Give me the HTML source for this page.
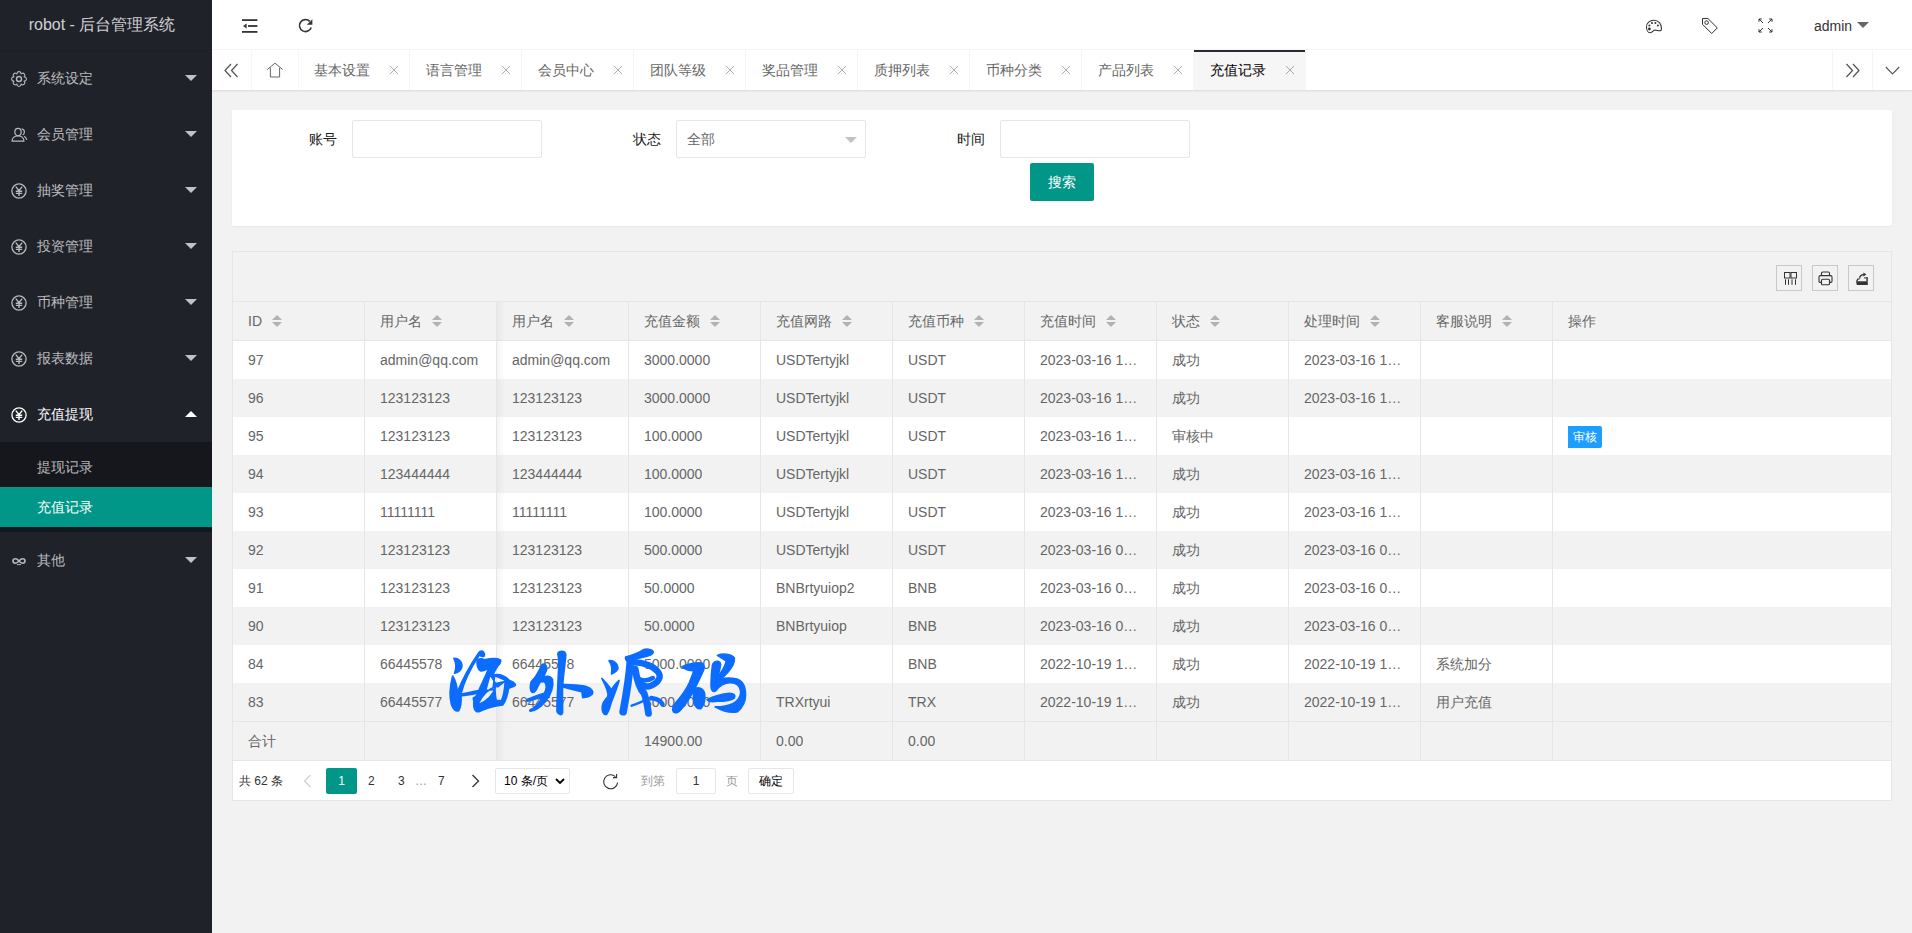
<!DOCTYPE html>
<html><head><meta charset="utf-8">
<style>
*{margin:0;padding:0;box-sizing:border-box}
html,body{width:1912px;height:933px;overflow:hidden;background:#f2f2f2;font-family:"Liberation Sans",sans-serif;font-size:14px;color:#666;position:relative}
.a{position:absolute}
svg{display:block}
#side{position:absolute;left:0;top:0;width:212px;height:933px;background:#20222A}
#logo{position:absolute;left:-4px;top:0;width:212px;height:50px;line-height:50px;text-align:center;color:rgba(255,255,255,.8);font-size:16px;box-shadow:0 1px 2px 0 rgba(0,0,0,.15)}
.nav{position:absolute;left:0;width:212px;height:56px;line-height:56px;color:rgba(255,255,255,.7);font-size:14px}
.nav .t{position:absolute;left:37px;top:0}
.nav .ic{position:absolute;left:11px;top:20px}
.nav .arr{position:absolute;left:185px;top:25px;width:0;height:0;border-left:6px solid transparent;border-right:6px solid transparent;border-top:6px solid #c2c2c2}
.nav .arr.up{border-top:none;border-bottom:6px solid #fff;top:25px}
.child{position:absolute;left:0;top:442px;width:212px;height:90px;background:rgba(0,0,0,.3)}
.dd{position:absolute;left:0;width:212px;height:40px;line-height:40px;color:rgba(255,255,255,.7)}
.dd .t{position:absolute;left:37px;top:0}
#header{position:absolute;left:212px;top:0;width:1700px;height:50px;background:#fff;border-bottom:1px solid #f6f6f6}
#tabs{position:absolute;left:212px;top:50px;width:1700px;height:40px;background:#fff;box-shadow:0 1px 2px 0 rgba(0,0,0,.1)}
.tab{position:absolute;top:0;height:40px;line-height:40px;border-right:1px solid #f6f6f6;color:#666;width:112px}
.tab .t{position:absolute;left:16px;top:0}
.tab .x{position:absolute;left:92px;top:16px}
.card{position:absolute;background:#fff;border-radius:2px;box-shadow:0 1px 2px 0 rgba(0,0,0,.05)}
.lbl{position:absolute;color:#1a1a1a;line-height:38px;height:38px}
.inp{position:absolute;height:38px;border:1px solid #e6e6e6;border-radius:2px;background:#fff}
.btn{position:absolute;background:#009688;color:#fff;border-radius:2px;text-align:center}
#tbl{position:absolute;left:232px;top:251px;width:1660px;height:550px;border:1px solid #e6e6e6;background:#f2f2f2}
.row{position:absolute;left:0;width:1658px;height:38px;line-height:38px;background:#fff}
.row.g{background:#f2f2f2}
.cell{position:absolute;top:0;height:38px;padding-left:15px;white-space:nowrap;overflow:hidden;color:#666}
.vl{position:absolute;width:1px;background:#e6e6e6}
.hl{position:absolute;height:1px;background:#e6e6e6}
.sort{display:inline-block;vertical-align:middle;position:relative;width:10px;height:12px;margin-left:10px;top:-1px}
.sort:before{content:"";position:absolute;left:0;top:0;border-left:5px solid transparent;border-right:5px solid transparent;border-bottom:5px solid #b2b2b2}
.sort:after{content:"";position:absolute;left:0;top:7px;border-left:5px solid transparent;border-right:5px solid transparent;border-top:5px solid #b2b2b2}
.tool{position:absolute;top:14px;width:26px;height:26px;border:1px solid #c9c9c9;border-radius:0}
#page{position:absolute;left:0;top:509px;width:1658px;height:39px;background:#fff;font-size:12px;color:#333}

</style></head><body>
<div id="side">
  <div id="logo">robot - 后台管理系统</div>
  <div class="nav" style="top:50px">
    <svg class="ic" width="16" height="16" viewBox="0 0 16 16" style="top:21px;left:11px"><g fill="none" stroke="#b8b9bc" stroke-width="1.1"><path d="M6.09,3.38 A2.05,2.05 0 1 1 9.91,3.38 A2.05,2.05 0 1 1 12.62,6.09 A2.05,2.05 0 1 1 12.62,9.91 A2.05,2.05 0 1 1 9.91,12.62 A2.05,2.05 0 1 1 6.09,12.62 A2.05,2.05 0 1 1 3.38,9.91 A2.05,2.05 0 1 1 3.38,6.09 A2.05,2.05 0 1 1 6.09,3.38Z"/><circle cx="8" cy="8" r="2.5" stroke-width="1.4"/></g></svg>
    <span class="t">系统设定</span><i class="arr"></i>
  </div>
  <div class="nav" style="top:106px">
    <svg class="ic" width="17" height="16" viewBox="0 0 17 16" style="top:21px"><g fill="none" stroke="#b8b9bc" stroke-width="1.2"><ellipse cx="7" cy="5" rx="3.2" ry="3.7"/><path d="M1.1 14.1c0-3.2 2.6-5.2 5.9-5.2s5.9 2 5.9 5.2z"/><path d="M10.6 1.9c1.6.3 2.8 1.5 2.8 3.2 0 1.2-.6 2.3-1.6 2.9M13.2 9.2c1.5.9 2.4 2.2 2.4 3.8"/></g></svg>
    <span class="t">会员管理</span><i class="arr"></i>
  </div>
  <div class="nav" style="top:162px">
    <svg class="ic" width="16" height="16" viewBox="0 0 16 16" style="top:21px"><g fill="none" stroke="#b8b9bc" stroke-width="1.3"><circle cx="8" cy="8" r="7.1"/><path d="M4.8 3.6L8 7.6l3.2-4M4.8 8.2h6.4M4.8 10.4h6.4M8 7.6v5.4" stroke-width="1.4"/></g></svg>
    <span class="t">抽奖管理</span><i class="arr"></i>
  </div>
  <div class="nav" style="top:218px">
    <svg class="ic" width="16" height="16" viewBox="0 0 16 16" style="top:21px"><g fill="none" stroke="#b8b9bc" stroke-width="1.3"><circle cx="8" cy="8" r="7.1"/><path d="M4.8 3.6L8 7.6l3.2-4M4.8 8.2h6.4M4.8 10.4h6.4M8 7.6v5.4" stroke-width="1.4"/></g></svg>
    <span class="t">投资管理</span><i class="arr"></i>
  </div>
  <div class="nav" style="top:274px">
    <svg class="ic" width="16" height="16" viewBox="0 0 16 16" style="top:21px"><g fill="none" stroke="#b8b9bc" stroke-width="1.3"><circle cx="8" cy="8" r="7.1"/><path d="M4.8 3.6L8 7.6l3.2-4M4.8 8.2h6.4M4.8 10.4h6.4M8 7.6v5.4" stroke-width="1.4"/></g></svg>
    <span class="t">币种管理</span><i class="arr"></i>
  </div>
  <div class="nav" style="top:330px">
    <svg class="ic" width="16" height="16" viewBox="0 0 16 16" style="top:21px"><g fill="none" stroke="#b8b9bc" stroke-width="1.3"><circle cx="8" cy="8" r="7.1"/><path d="M4.8 3.6L8 7.6l3.2-4M4.8 8.2h6.4M4.8 10.4h6.4M8 7.6v5.4" stroke-width="1.4"/></g></svg>
    <span class="t">报表数据</span><i class="arr"></i>
  </div>
  <div class="nav" style="top:386px;color:#fff">
    <svg class="ic" width="16" height="16" viewBox="0 0 16 16" style="top:21px"><g fill="none" stroke="#fff" stroke-width="1.3"><circle cx="8" cy="8" r="7.1"/><path d="M4.8 3.6L8 7.6l3.2-4M4.8 8.2h6.4M4.8 10.4h6.4M8 7.6v5.4" stroke-width="1.4"/></g></svg>
    <span class="t">充值提现</span><i class="arr up"></i>
  </div>
  <div class="child">
    <div class="dd" style="top:5px"><span class="t">提现记录</span></div>
    <div class="dd" style="top:45px;background:#009688;color:#fff"><span class="t">充值记录</span></div>
  </div>
  <div class="nav" style="top:532px">
    <svg class="ic" width="16" height="16" viewBox="0 0 16 16" style="top:21px"><g fill="none" stroke="#b8b9bc" stroke-width="1.6"><path d="M8 8C6.8 6.6 5.9 5.8 4.4 5.8 3.1 5.8 2 6.7 2 8s1.1 2.2 2.4 2.2C5.9 10.2 6.8 9.4 8 8s2.1-2.2 3.6-2.2C12.9 5.8 14 6.7 14 8s-1.1 2.2-2.4 2.2C10.1 10.2 9.2 9.4 8 8z"/><path d="M6 11.6h4" stroke-width="1"/></g></svg>
    <span class="t">其他</span><i class="arr"></i>
  </div>
</div>

<div id="header">
  <svg class="a" style="left:30px;top:18px" width="16" height="16" viewBox="0 0 16 16"><g fill="#333"><rect x="0" y="1.2" width="15.4" height="1.8"/><rect x="6" y="7.1" width="9.4" height="1.8"/><rect x="0" y="13" width="15.4" height="1.8"/><path d="M1 8l3.6-2.6v5.2z"/></g></svg>
  <svg class="a" style="left:86px;top:18px" width="16" height="16" viewBox="0 0 16 16"><g fill="none" stroke="#333" stroke-width="1.6"><path d="M13.2 9.4A6 6 0 1 1 11.8 3.4"/></g><path d="M14.4 1.2v5.6H8.8z" fill="#333"/></svg>
  <svg class="a" style="left:1433px;top:18px" width="18" height="17" viewBox="0 0 18 17"><g fill="none" stroke="#333" stroke-width="1.05"><path d="M9 2.2C4.6 2.2 1.5 5.2 1.5 9c0 3.2 1.5 5.8 3.6 5.8 2 0 2.4-2.2 4.4-2.6 1.8-.4 3.2.6 5 .6 1.4 0 2-1 2-2.4C16.5 6 13.4 2.2 9 2.2z"/></g><g fill="#333"><circle cx="4.4" cy="11" r="1.4"/><circle cx="4.4" cy="7.4" r="1"/><circle cx="7" cy="4.9" r="1"/><circle cx="10.4" cy="4.9" r="1"/><circle cx="12.9" cy="7.6" r="1"/></g></svg>
  <svg class="a" style="left:1489px;top:17px" width="18" height="18" viewBox="0 0 18 18"><g fill="none" stroke="#333" stroke-width="1"><path d="M1.5 1.5h5.4l9.4 9.4-5.6 5.6-9.2-9.2z"/><circle cx="5.6" cy="5.6" r="1.8"/></g></svg>
  <svg class="a" style="left:1546px;top:18px" width="15" height="15" viewBox="0 0 15 15"><g fill="none" stroke="#333" stroke-width="1"><path d="M1 1l4 4M1 1v2.8M1 1h2.8M14 1l-4 4M14 1v2.8M14 1h-2.8M1 14l4-4M1 14v-2.8M1 14h2.8M14 14l-4-4M14 14v-2.8M14 14h-2.8"/></g></svg>
  <span class="a" style="left:1602px;top:1px;line-height:50px;color:#333;font-size:14px">admin</span>
  <i class="a" style="left:1645px;top:22px;width:0;height:0;border-left:6px solid transparent;border-right:6px solid transparent;border-top:6px solid #666"></i>
</div>
<div id="tabs">
  <div class="a" style="left:0;top:0;width:40px;height:40px;border-right:1px solid #f6f6f6"></div>
  <svg class="a" style="left:12px;top:13px" width="15" height="15" viewBox="0 0 15 15"><g fill="none" stroke="#555" stroke-width="1.25"><path d="M7 1L1 7.5 7 14M13.5 1l-6 6.5 6 6.5"/></g></svg>
  <div class="tab" style="left:40px;width:47px"></div>
  <svg class="a" style="left:54px;top:12px" width="18" height="16" viewBox="0 0 18 16"><g fill="none" stroke="#666" stroke-width="1"><path d="M1.2 7.6L9 1.2l7.8 6.4M4.4 5.6v9.4h9.2V5.6"/></g></svg>
  <div class="tab" style="left:86px"><span class="t">基本设置</span><svg class="x" width="8" height="8" viewBox="0 0 8 8"><path d="M0 0L8 8M8 0L0 8" stroke="#aaa" stroke-width="1"/></svg></div>
  <div class="tab" style="left:198px"><span class="t">语言管理</span><svg class="x" width="8" height="8" viewBox="0 0 8 8"><path d="M0 0L8 8M8 0L0 8" stroke="#aaa" stroke-width="1"/></svg></div>
  <div class="tab" style="left:310px"><span class="t">会员中心</span><svg class="x" width="8" height="8" viewBox="0 0 8 8"><path d="M0 0L8 8M8 0L0 8" stroke="#aaa" stroke-width="1"/></svg></div>
  <div class="tab" style="left:422px"><span class="t">团队等级</span><svg class="x" width="8" height="8" viewBox="0 0 8 8"><path d="M0 0L8 8M8 0L0 8" stroke="#aaa" stroke-width="1"/></svg></div>
  <div class="tab" style="left:534px"><span class="t">奖品管理</span><svg class="x" width="8" height="8" viewBox="0 0 8 8"><path d="M0 0L8 8M8 0L0 8" stroke="#aaa" stroke-width="1"/></svg></div>
  <div class="tab" style="left:646px"><span class="t">质押列表</span><svg class="x" width="8" height="8" viewBox="0 0 8 8"><path d="M0 0L8 8M8 0L0 8" stroke="#aaa" stroke-width="1"/></svg></div>
  <div class="tab" style="left:758px"><span class="t">币种分类</span><svg class="x" width="8" height="8" viewBox="0 0 8 8"><path d="M0 0L8 8M8 0L0 8" stroke="#aaa" stroke-width="1"/></svg></div>
  <div class="tab" style="left:870px"><span class="t">产品列表</span><svg class="x" width="8" height="8" viewBox="0 0 8 8"><path d="M0 0L8 8M8 0L0 8" stroke="#aaa" stroke-width="1"/></svg></div>
  <div class="tab" style="left:982px;background:#f6f6f6;color:#000"><i class="a" style="left:0;top:0;width:111px;height:2px;background:#292B34"></i><span class="t">充值记录</span><svg class="x" width="8" height="8" viewBox="0 0 8 8"><path d="M0 0L8 8M8 0L0 8" stroke="#aaa" stroke-width="1"/></svg></div>
  <div class="a" style="left:1620px;top:0;width:40px;height:40px;border-left:1px solid #f6f6f6"></div>
  <svg class="a" style="left:1633px;top:13px" width="15" height="15" viewBox="0 0 15 15"><g fill="none" stroke="#555" stroke-width="1.25"><path d="M1.5 1l6 6.5-6 6.5M8 1l6 6.5L8 14"/></g></svg>
  <div class="a" style="left:1660px;top:0;width:40px;height:40px;border-left:1px solid #f6f6f6"></div>
  <svg class="a" style="left:1673px;top:16px" width="15" height="9" viewBox="0 0 15 9"><path d="M.8 1l6.7 7 6.7-7" fill="none" stroke="#555" stroke-width="1.1"/></svg>
</div>

<div class="card" style="left:232px;top:110px;width:1660px;height:116px">
  <div class="lbl" style="left:0;top:10px;width:105px;text-align:right">账号</div>
  <div class="inp" style="left:120px;top:10px;width:190px"></div>
  <div class="lbl" style="left:0;top:10px;width:429px;text-align:right">状态</div>
  <div class="inp" style="left:444px;top:10px;width:190px"><span class="a" style="left:10px;top:0;line-height:36px;color:#666">全部</span><i class="a" style="left:168px;top:16px;width:0;height:0;border-left:6px solid transparent;border-right:6px solid transparent;border-top:6px solid #c2c2c2"></i></div>
  <div class="lbl" style="left:0;top:10px;width:753px;text-align:right">时间</div>
  <div class="inp" style="left:768px;top:10px;width:190px"></div>
  <div class="btn" style="left:798px;top:53px;width:64px;height:38px;line-height:38px">搜索</div>
</div>

<div id="tbl">
<div class="hl" style="left:0;top:49px;width:1658px"></div>
<div class="tool" style="left:1543px;top:13px"><svg class="a" style="left:7px;top:6px" width="14" height="14" viewBox="0 0 14 14"><g fill="none" stroke="#333" stroke-width="1"><rect x="0.5" y="0.5" width="5.5" height="5.5"/><rect x="7" y="0.5" width="5.5" height="5.5"/><path d="M1.5 7.3v5.5M4.5 7.3v5.5M8 7.3v5.5M11.5 7.3v5.5"/></g></svg></div>
<div class="tool" style="left:1579px;top:13px"><svg class="a" style="left:5px;top:5px" width="15" height="15" viewBox="0 0 15 15"><g fill="none" stroke="#333" stroke-width="1.1"><path d="M3.5 4.6V2.2c0-.8.5-1.2 1.2-1.2h5.6c.7 0 1.2.4 1.2 1.2v2.4"/><path d="M3.5 11.4H2.2c-.7 0-1.2-.5-1.2-1.2V6c0-.8.6-1.4 1.4-1.4h10.2c.8 0 1.4.6 1.4 1.4v4.2c0 .7-.5 1.2-1.2 1.2h-1.3"/><rect x="3.5" y="8.2" width="8" height="5.6" rx="1"/></g></svg></div>
<div class="tool" style="left:1615px;top:13px"><svg class="a" style="left:6px;top:6px" width="14" height="14" viewBox="0 0 14 14"><g fill="#333"><path d="M1 9.2h11.8V13H1.8z"/><path d="M1 9.2l1.4-2.6h2.2v1H3.2L2.6 9.2z"/><rect x="11.4" y="5.4" width="1.4" height="4"/><rect x="9" y="5.4" width="3.8" height="1"/></g><path d="M4.6 6.6c0-2.4 1.8-4 4.4-4" fill="none" stroke="#333" stroke-width="1.2"/><path d="M8.4 0.6l3 2-3 2z" fill="#333"/></svg></div>
<div class="row g" style="top:50px">
<div class="cell" style="left:0px">ID<i class="sort"></i></div>
<div class="cell" style="left:132px">用户名<i class="sort"></i></div>
<div class="cell" style="left:264px">用户名<i class="sort"></i></div>
<div class="cell" style="left:396px">充值金额<i class="sort"></i></div>
<div class="cell" style="left:528px">充值网路<i class="sort"></i></div>
<div class="cell" style="left:660px">充值币种<i class="sort"></i></div>
<div class="cell" style="left:792px">充值时间<i class="sort"></i></div>
<div class="cell" style="left:924px">状态<i class="sort"></i></div>
<div class="cell" style="left:1056px">处理时间<i class="sort"></i></div>
<div class="cell" style="left:1188px">客服说明<i class="sort"></i></div>
<div class="cell" style="left:1320px">操作</div>
</div>
<div class="hl" style="left:0;top:88px;width:1658px"></div>
<div class="row" style="top:89px">
<div class="cell" style="left:0px">97</div>
<div class="cell" style="left:132px">admin@qq.com</div>
<div class="cell" style="left:264px">admin@qq.com</div>
<div class="cell" style="left:396px">3000.0000</div>
<div class="cell" style="left:528px">USDTertyjkl</div>
<div class="cell" style="left:660px">USDT</div>
<div class="cell" style="left:792px">2023-03-16 1…</div>
<div class="cell" style="left:924px">成功</div>
<div class="cell" style="left:1056px">2023-03-16 1…</div>
</div>
<div class="row g" style="top:127px">
<div class="cell" style="left:0px">96</div>
<div class="cell" style="left:132px">123123123</div>
<div class="cell" style="left:264px">123123123</div>
<div class="cell" style="left:396px">3000.0000</div>
<div class="cell" style="left:528px">USDTertyjkl</div>
<div class="cell" style="left:660px">USDT</div>
<div class="cell" style="left:792px">2023-03-16 1…</div>
<div class="cell" style="left:924px">成功</div>
<div class="cell" style="left:1056px">2023-03-16 1…</div>
</div>
<div class="row" style="top:165px">
<div class="cell" style="left:0px">95</div>
<div class="cell" style="left:132px">123123123</div>
<div class="cell" style="left:264px">123123123</div>
<div class="cell" style="left:396px">100.0000</div>
<div class="cell" style="left:528px">USDTertyjkl</div>
<div class="cell" style="left:660px">USDT</div>
<div class="cell" style="left:792px">2023-03-16 1…</div>
<div class="cell" style="left:924px">审核中</div>
<div class="a" style="left:1335px;top:9px;width:34px;height:22px;line-height:22px;background:#1E9FFF;color:#fff;font-size:12px;text-align:center;border-radius:0 2px 2px 0">审核</div>
</div>
<div class="row g" style="top:203px">
<div class="cell" style="left:0px">94</div>
<div class="cell" style="left:132px">123444444</div>
<div class="cell" style="left:264px">123444444</div>
<div class="cell" style="left:396px">100.0000</div>
<div class="cell" style="left:528px">USDTertyjkl</div>
<div class="cell" style="left:660px">USDT</div>
<div class="cell" style="left:792px">2023-03-16 1…</div>
<div class="cell" style="left:924px">成功</div>
<div class="cell" style="left:1056px">2023-03-16 1…</div>
</div>
<div class="row" style="top:241px">
<div class="cell" style="left:0px">93</div>
<div class="cell" style="left:132px">11111111</div>
<div class="cell" style="left:264px">11111111</div>
<div class="cell" style="left:396px">100.0000</div>
<div class="cell" style="left:528px">USDTertyjkl</div>
<div class="cell" style="left:660px">USDT</div>
<div class="cell" style="left:792px">2023-03-16 1…</div>
<div class="cell" style="left:924px">成功</div>
<div class="cell" style="left:1056px">2023-03-16 1…</div>
</div>
<div class="row g" style="top:279px">
<div class="cell" style="left:0px">92</div>
<div class="cell" style="left:132px">123123123</div>
<div class="cell" style="left:264px">123123123</div>
<div class="cell" style="left:396px">500.0000</div>
<div class="cell" style="left:528px">USDTertyjkl</div>
<div class="cell" style="left:660px">USDT</div>
<div class="cell" style="left:792px">2023-03-16 0…</div>
<div class="cell" style="left:924px">成功</div>
<div class="cell" style="left:1056px">2023-03-16 0…</div>
</div>
<div class="row" style="top:317px">
<div class="cell" style="left:0px">91</div>
<div class="cell" style="left:132px">123123123</div>
<div class="cell" style="left:264px">123123123</div>
<div class="cell" style="left:396px">50.0000</div>
<div class="cell" style="left:528px">BNBrtyuiop2</div>
<div class="cell" style="left:660px">BNB</div>
<div class="cell" style="left:792px">2023-03-16 0…</div>
<div class="cell" style="left:924px">成功</div>
<div class="cell" style="left:1056px">2023-03-16 0…</div>
</div>
<div class="row g" style="top:355px">
<div class="cell" style="left:0px">90</div>
<div class="cell" style="left:132px">123123123</div>
<div class="cell" style="left:264px">123123123</div>
<div class="cell" style="left:396px">50.0000</div>
<div class="cell" style="left:528px">BNBrtyuiop</div>
<div class="cell" style="left:660px">BNB</div>
<div class="cell" style="left:792px">2023-03-16 0…</div>
<div class="cell" style="left:924px">成功</div>
<div class="cell" style="left:1056px">2023-03-16 0…</div>
</div>
<div class="row" style="top:393px">
<div class="cell" style="left:0px">84</div>
<div class="cell" style="left:132px">66445578</div>
<div class="cell" style="left:264px">66445578</div>
<div class="cell" style="left:396px">5000.0000</div>
<div class="cell" style="left:660px">BNB</div>
<div class="cell" style="left:792px">2022-10-19 1…</div>
<div class="cell" style="left:924px">成功</div>
<div class="cell" style="left:1056px">2022-10-19 1…</div>
<div class="cell" style="left:1188px">系统加分</div>
</div>
<div class="row g" style="top:431px">
<div class="cell" style="left:0px">83</div>
<div class="cell" style="left:132px">66445577</div>
<div class="cell" style="left:264px">66445577</div>
<div class="cell" style="left:396px">3000.0000</div>
<div class="cell" style="left:528px">TRXrtyui</div>
<div class="cell" style="left:660px">TRX</div>
<div class="cell" style="left:792px">2022-10-19 1…</div>
<div class="cell" style="left:924px">成功</div>
<div class="cell" style="left:1056px">2022-10-19 1…</div>
<div class="cell" style="left:1188px">用户充值</div>
</div>
<div class="hl" style="left:0;top:469px;width:1658px"></div>
<div class="row g" style="top:470px">
<div class="cell" style="left:0px">合计</div>
<div class="cell" style="left:396px">14900.00</div>
<div class="cell" style="left:528px">0.00</div>
<div class="cell" style="left:660px">0.00</div>
</div>
<div class="hl" style="left:0;top:508px;width:1658px"></div>
<div class="vl" style="left:131px;top:50px;height:459px"></div>
<div class="vl" style="left:263px;top:50px;height:459px"></div>
<div class="vl" style="left:395px;top:50px;height:459px"></div>
<div class="vl" style="left:527px;top:50px;height:459px"></div>
<div class="vl" style="left:659px;top:50px;height:459px"></div>
<div class="vl" style="left:791px;top:50px;height:459px"></div>
<div class="vl" style="left:923px;top:50px;height:459px"></div>
<div class="vl" style="left:1055px;top:50px;height:459px"></div>
<div class="vl" style="left:1187px;top:50px;height:459px"></div>
<div class="vl" style="left:1319px;top:50px;height:459px"></div>
<div class="a" style="left:264px;top:50px;width:8px;height:458px;background:linear-gradient(to right,rgba(0,0,0,.04),rgba(0,0,0,0))"></div>
<div id="page">
<span class="a" style="left:6px;top:1px;line-height:39px">共 62 条</span>
<svg class="a" style="left:70px;top:13px" width="9" height="14" viewBox="0 0 9 14"><path d="M7.5 1L1.5 7l6 6" fill="none" stroke="#d2d2d2" stroke-width="1.3"/></svg>
<span class="a" style="left:93px;top:7px;width:31px;height:26px;line-height:26px;background:#009688;color:#fff;text-align:center;border-radius:2px">1</span>
<span class="a" style="left:135px;top:1px;line-height:39px">2</span>
<span class="a" style="left:165px;top:1px;line-height:39px">3</span>
<span class="a" style="left:182px;top:1px;line-height:39px;color:#999">…</span>
<span class="a" style="left:205px;top:1px;line-height:39px">7</span>
<svg class="a" style="left:238px;top:13px" width="9" height="14" viewBox="0 0 9 14"><path d="M1.5 1l6 6-6 6" fill="none" stroke="#333" stroke-width="1.3"/></svg>
<div class="a" style="left:262px;top:7px;width:75px;height:26px;border:1px solid #e6e6e6;border-radius:2px"><span class="a" style="left:8px;top:0;line-height:24px;color:#000">10 条/页</span><svg class="a" style="left:59px;top:9px" width="10" height="7" viewBox="0 0 10 7"><path d="M1 1l4 4 4-4" fill="none" stroke="#000" stroke-width="1.8"/></svg></div>
<svg class="a" style="left:369px;top:12px" width="18" height="18" viewBox="0 0 18 18"><path d="M15.6 9.6A7 7 0 1 1 13.4 3.6" fill="none" stroke="#333" stroke-width="1.1"/><path d="M14.6 1v3.6H11" fill="none" stroke="#333" stroke-width="1.1"/></svg>
<span class="a" style="left:408px;top:1px;line-height:39px;color:#999">到第</span>
<div class="a" style="left:443px;top:7px;width:40px;height:26px;border:1px solid #e6e6e6;border-radius:2px;text-align:center;line-height:24px;color:#333">1</div>
<span class="a" style="left:493px;top:1px;line-height:39px;color:#999">页</span>
<div class="a" style="left:515px;top:7px;width:46px;height:26px;border:1px solid #e6e6e6;border-radius:2px;text-align:center;line-height:24px;color:#000">确定</div>
</div>
</div>
<svg class="a" style="left:445px;top:645px" width="80" height="75" viewBox="0 0 995 933"><g fill="#0b6cff" stroke="#0b6cff" stroke-width="20" stroke-linejoin="round" fill-rule="evenodd">
<path d="M110,165 C185,165 225,230 205,285 C190,325 150,345 118,352 C140,300 140,225 110,165Z"/>
<path d="M95,385 C130,440 150,520 152,590 C220,420 320,240 420,95 C440,65 480,70 490,110 C495,140 480,150 455,140 C440,135 432,130 425,128 C330,270 240,440 198,610 C205,700 195,780 170,818 C135,832 100,800 80,740 C55,650 60,520 95,385Z"/>
<path d="M195,612 C270,600 340,580 420,568 L440,590 C370,610 290,625 195,635Z"/>
<path d="M400,200 C410,165 460,165 490,185 C560,170 640,160 690,185 C700,210 680,240 655,265 C630,300 610,340 595,375 C660,360 740,380 800,440 C840,460 880,470 875,500 C865,520 820,520 790,540 C780,620 750,700 720,745 C600,760 480,800 420,830 C370,840 350,780 360,700 C350,670 345,650 370,650 C400,640 420,560 450,500 C480,430 520,350 545,290 C500,310 470,330 440,320 C410,310 395,250 400,200Z M555,388 L619,380 L595,556 L507,564Z M551,353 L759,441 L655,521Z M417,724 C473,612 553,540 633,516 C601,612 537,692 417,740Z M629,479 L749,455 C741,567 717,663 701,695 L637,687 C621,615 618,535 629,479Z"/>
</g></svg>
<svg class="a" style="left:520px;top:645px" width="80" height="75" viewBox="0 0 995 933"><g fill="#0b6cff" stroke="#0b6cff" stroke-width="20" stroke-linejoin="round">
<path d="M270,250 C300,220 340,250 330,310 C310,380 250,450 220,520 C200,570 180,600 150,590 C120,570 125,500 140,455 C180,420 230,340 270,250Z"/>
<path d="M230,430 C290,380 380,370 405,430 C420,520 380,620 320,700 C260,770 190,820 130,825 C110,815 130,800 160,790 C230,740 300,640 320,560 C335,500 320,440 270,460Z"/>
<path d="M80,680 C150,650 230,620 300,600 L320,640 C240,660 160,680 90,700Z"/>
<path d="M470,110 C480,70 560,60 570,120 C560,250 535,400 530,520 C525,650 530,760 530,840 C520,880 480,870 460,830 C460,700 470,500 480,300 C485,200 480,150 470,110Z"/>
<path d="M520,490 C620,500 750,490 830,520 C890,540 920,580 900,610 C870,640 820,655 780,655 L770,580 C700,570 600,540 520,520Z"/>
</g></svg>
<svg class="a" style="left:595px;top:645px" width="80" height="75" viewBox="0 0 995 933"><g fill="#0b6cff" stroke="#0b6cff" stroke-width="20" stroke-linejoin="round">
<path d="M175,195 C240,190 290,240 285,290 C280,320 240,345 205,360 C215,310 215,250 175,195Z"/>
<path d="M85,415 C140,470 180,520 205,555 C240,500 270,460 300,440 C280,520 240,620 200,720 C185,780 170,840 140,865 C100,870 85,820 90,760 C95,700 130,680 160,640 C170,600 140,520 85,415Z"/>
<path d="M380,150 C450,130 520,110 600,60 C650,40 720,60 725,90 C715,120 660,140 610,150 C560,160 480,175 420,200 C395,210 375,180 380,150Z"/>
</g><g fill="none" stroke="#0b6cff" stroke-linecap="round" stroke-linejoin="round">
<path d="M440,200 C425,400 390,620 350,830" stroke-width="95"/>
<path d="M480,215 C600,215 720,260 780,330 C830,390 800,460 700,505 C640,530 590,510 555,470" stroke-width="80"/>
<path d="M520,410 C580,450 650,450 720,410" stroke-width="55"/>
<path d="M500,300 C520,430 550,540 610,600 C640,680 655,770 665,850" stroke-width="85"/>
<path d="M455,755 C520,735 570,710 625,690" stroke-width="30"/>
<path d="M700,660 C760,670 820,700 840,735" stroke-width="55"/>
</g></svg>
<svg class="a" style="left:670px;top:645px" width="80" height="75" viewBox="0 0 995 933"><g fill="#0b6cff" stroke="#0b6cff" stroke-width="20" stroke-linejoin="round">
<path d="M150,270 C220,235 330,215 395,225 C430,240 430,290 410,330 C380,400 340,480 300,560 C250,650 190,740 140,800 C110,840 70,850 45,835 C25,805 35,760 70,720 C140,640 200,560 240,470 C265,410 285,360 295,320 C250,320 190,310 150,270Z"/>
<path d="M300,550 C350,520 410,530 430,600 C440,670 420,750 385,790 C350,800 310,770 300,720 C290,660 290,600 300,550Z"/>
<path d="M590,130 C650,100 760,110 800,160 C810,220 770,280 720,340 C680,390 640,420 600,450 L585,400 C640,340 680,280 700,200 C660,170 620,150 590,130Z"/>
<path d="M530,240 C560,190 620,190 630,240 C620,310 600,370 590,420 C630,420 720,400 820,420 C900,440 940,520 940,620 C940,700 900,780 840,830 C760,850 650,820 560,770 C620,770 720,760 780,730 C840,700 880,640 880,580 C870,500 820,470 750,470 C680,470 620,500 570,570 C530,590 510,560 510,500 C510,400 520,300 530,240Z"/>
<path d="M460,680 C540,640 640,610 740,600 C800,600 820,630 800,660 C760,690 680,700 590,700 C530,710 480,710 460,680Z"/>
</g></svg>

</body></html>
